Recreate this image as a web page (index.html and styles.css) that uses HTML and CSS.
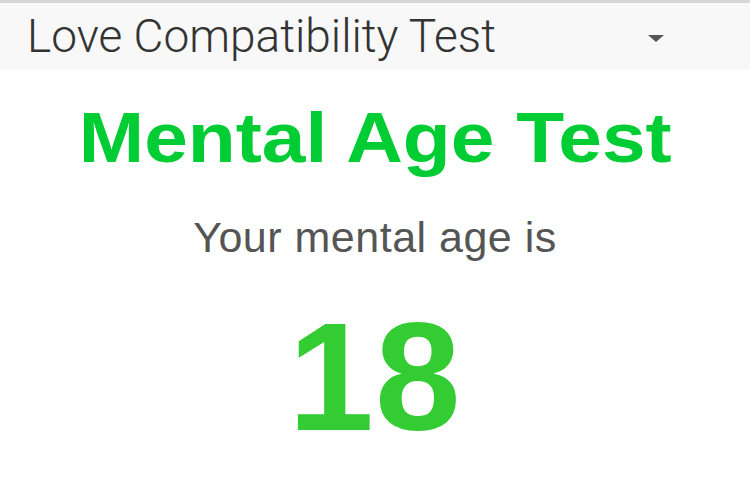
FILE: index.html
```html
<!DOCTYPE html>
<html>
<head>
<meta charset="utf-8">
<link rel="stylesheet" href="styles.css">
</head>
<body>
<div class="select-bar">
  <span class="select-label">Love Compatibility Test</span>
  <span class="select-arrow"></span>
</div>
<main class="result">
  <h1 class="title">Mental Age Test</h1>
  <p class="subtitle">Your mental age is</p>
  <div class="age">18</div>
</main>
</body>
</html>
```
FILE: styles.css
```css
html, body {
  margin: 0;
  padding: 0;
  background: #ffffff;
}
body {
  width: 750px;
  height: 489px;
  overflow: hidden;
}
.select-bar {
  box-sizing: border-box;
  height: 70px;
  border-top: 3px solid #d6d6d6;
  background: #f8f8f8;
  display: flex;
  align-items: center;
  padding-left: 27px;
}
.select-label {
  font-family: Roboto, "Liberation Sans", sans-serif;
  font-weight: 300;
  font-size: 46px;
  line-height: 1;
  color: #333333;
  margin-top: -1px;
}
.select-arrow {
  width: 0;
  height: 0;
  border-left: 8px solid transparent;
  border-right: 8px solid transparent;
  border-top: 7px solid #555555;
  margin-left: auto;
  margin-right: 86px;
  margin-top: 4px;
}
.result {
  display: flex;
  flex-direction: column;
  align-items: center;
  font-family: "Liberation Sans", Arial, sans-serif;
}
.title {
  margin: 28px 0 0;
  font-size: 71px;
  font-weight: 700;
  line-height: 80px;
  transform: scaleX(1.105);
  color: #00cc33;
}
.subtitle {
  margin: 35px 0 0;
  font-size: 43px;
  line-height: 48px;
  letter-spacing: 0.5px;
  color: #555555;
}
.age {
  margin-top: 36px;
  font-size: 154px;
  font-weight: 700;
  line-height: 160px;
  letter-spacing: 1px;
  color: #33cc33;
}
```
